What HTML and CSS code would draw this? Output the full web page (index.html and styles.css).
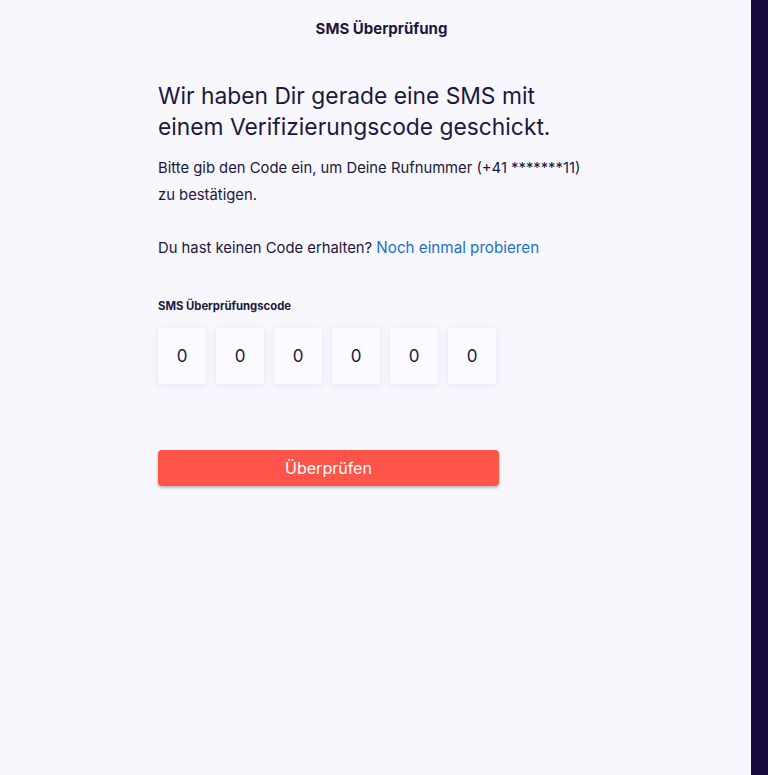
FILE: index.html
```html
<!DOCTYPE html>
<html lang="de">
<head>
<meta charset="utf-8">
<title>SMS Überprüfung</title>
<link rel="stylesheet" href="styles.css">
</head>
<body>
<div class="page">
  <main class="main">
    <header class="topbar">SMS Überprüfung</header>
    <section class="content">
      <h1 class="heading">Wir haben Dir gerade eine SMS mit<br>einem Verifizierungscode geschickt.</h1>
      <p class="text">Bitte gib den Code ein, um Deine Rufnummer (+41 *******11)<br>zu bestätigen.</p>
      <p class="text resend">Du hast keinen Code erhalten? <a class="link" href="#">Noch einmal probieren</a></p>
      <label class="label">SMS Überprüfungscode</label>
      <div class="codes">
        <div class="code">0</div>
        <div class="code">0</div>
        <div class="code">0</div>
        <div class="code">0</div>
        <div class="code">0</div>
        <div class="code">0</div>
      </div>
      <button class="btn">Überprüfen</button>
    </section>
  </main>
  <aside class="side"></aside>
</div>
</body>
</html>
```
FILE: styles.css
```css
* { box-sizing: border-box; }
html, body { margin: 0; padding: 0; height: 100%; }
body {
  font-family: Inter, "Noto Sans", sans-serif;
  color: #1b1740;
  background: #f8f7fe;
}
.page { display: flex; height: 775px; }
.main { flex: 1; }
.side { width: 17px; background: #170b3b; }
.topbar {
  height: 56px;
  display: flex;
  align-items: center;
  justify-content: center;
  padding-left: 12px;
  font-weight: 700;
  font-size: 15px;
  color: #1b1740;
}
.content { padding-left: 158px; padding-top: 24px; }
.heading {
  margin: 0;
  font-weight: 400;
  font-size: 22.8px;
  line-height: 31px;
}
.text {
  margin: 13px 0 0;
  font-size: 14.8px;
  line-height: 27px;
}
.resend { margin-top: 25px; }
.link { color: #1c6fcf; text-decoration: none; font-size: 15.2px; }
.label {
  display: block;
  margin-top: 36px;
  font-size: 11.3px;
  font-weight: 700;
  line-height: 16px;
}
.codes { display: flex; gap: 10px; margin-top: 14px; }
.code {
  width: 48px;
  height: 56px;
  background: #fbfbff;
  border-radius: 3px;
  box-shadow: 0 1px 6px rgba(60, 50, 160, 0.10);
  display: flex;
  align-items: center;
  justify-content: center;
  font-size: 17px;
}
.btn {
  display: block;
  margin-top: 66px;
  width: 341px;
  height: 36px;
  border: 0;
  border-radius: 4px;
  background: #ff544a;
  color: #fff;
  font-family: inherit;
  font-size: 16px;
  box-shadow: 0 2px 3px rgba(0, 0, 0, 0.25);
}
```
